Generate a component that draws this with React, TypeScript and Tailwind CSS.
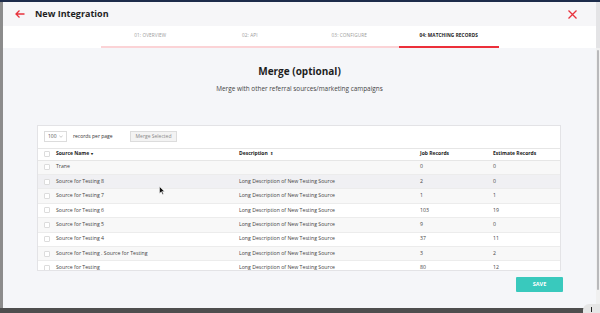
import React from "react";

type Row = { name: string; desc: string; jobs: string; est: string };

const rows: Row[] = [
  { name: "Trane", desc: "", jobs: "0", est: "0" },
  { name: "Source for Testing 8", desc: "Long Description of New Testing Source", jobs: "2", est: "0" },
  { name: "Source for Testing 7", desc: "Long Description of New Testing Source", jobs: "1", est: "1" },
  { name: "Source for Testing 6", desc: "Long Description of New Testing Source", jobs: "103", est: "19" },
  { name: "Source for Testing 5", desc: "Long Description of New Testing Source", jobs: "9", est: "0" },
  { name: "Source for Testing 4", desc: "Long Description of New Testing Source", jobs: "37", est: "11" },
  { name: "Source for Testing . Source for Testing", desc: "Long Description of New Testing Source", jobs: "3", est: "2" },
  { name: "Source for Testing", desc: "Long Description of New Testing Source", jobs: "80", est: "12" },
];

const tabs = ["01: OVERVIEW", "02: API", "03: CONFIGURE", "04: MATCHING RECORDS"];

const Checkbox = () => (
  <span className="block h-[6px] w-[6px] rounded-[1px] border border-[#dcdcdc] bg-white" />
);

const cols = "grid grid-cols-[15px_183px_181px_73px_1fr] items-center";

const App = () => {
  return (
    <div
      className="flex h-[313px] w-[600px] flex-col overflow-hidden bg-[#4b4b4b] [font-variant-ligatures:none]"
      style={{ fontFamily: '"Open Sans", "Liberation Sans", sans-serif' }}
    >
      <div className="h-[2px] bg-[#1d2c4b]" />
      <div className="flex flex-1">
        <div className="w-[3px] bg-[#8c8c8c]" />
        {/* modal */}
        <div className="flex flex-1 flex-col bg-[#f5f6f9]">
          <div className="flex h-[24px] items-center bg-[#f6f6f8] pl-[12px] pr-[19px]">
            <svg width="10" height="8" viewBox="0 0 10 8" className="text-[#e8323c]">
              <path d="M9.5 4H1M4.5 0.5L1 4l3.5 3.5" fill="none" stroke="currentColor" strokeWidth="1.3" />
            </svg>
            <span className="ml-[10px] text-[9px] font-bold text-[#1e1e1e]">New Integration</span>
            <svg width="9" height="9" viewBox="0 0 9 9" className="ml-auto text-[#e8323c]">
              <path d="M0.5 0.5l8 8M8.5 0.5l-8 8" stroke="currentColor" strokeWidth="1.3" />
            </svg>
          </div>
          <div className="flex h-[22px] justify-center bg-white">
            <div className="grid w-[398px] grid-cols-4">
              {tabs.map((t, i) => (
                <div
                  key={t}
                  className={`flex items-center justify-center text-[4.7px] tracking-[0.1px] ${
                    i === 3
                      ? "border-b-2 border-[#ec2f3a] font-bold text-[#222]"
                      : "border-b-2 border-[#fbd3d6] text-[#9a9a9a]"
                  }`}
                >
                  {t}
                </div>
              ))}
            </div>
          </div>
          <div className="relative flex flex-1 flex-col items-center">
            <div className="mt-[16px] text-[10px] font-bold text-[#1e1e1e]">Merge (optional)</div>
            <div className="mt-[5px] text-[6.4px] text-[#444]">
              Merge with other referral sources/marketing campaigns
            </div>
            <div className="mt-[31px] ml-[34px] flex h-[146px] w-[524px] flex-col self-start overflow-hidden border border-[#e3e3e6] bg-white">
              <div className="flex h-[22px] shrink-0 items-center pl-[6px] text-[5px] text-[#333]">
                <div className="flex h-[11px] w-[23px] items-center justify-between border border-[#dcdcdc] px-[3px] text-[#555]">
                  <span>100</span>
                  <svg width="4" height="3" viewBox="0 0 4 3">
                    <path d="M0.3 0.5L2 2.3 3.7 0.5" fill="none" stroke="#aaa" strokeWidth="0.6" />
                  </svg>
                </div>
                <span className="ml-[6px]">records per page</span>
                <div className="ml-[17px] flex h-[11px] items-center border border-[#dcdcdc] bg-[#f3f3f3] px-[5px] text-[#888]">
                  Merge Selected
                </div>
              </div>
              <div className={`${cols} h-[13px] shrink-0 border-y border-[#e6e6e6] text-[5px] font-bold text-[#222]`}>
                <div className="pl-[6px]">
                  <Checkbox />
                </div>
                <div className="flex items-center gap-[2px] pl-[3px]">
                  Source Name <span className="text-[4px]">▾</span>
                </div>
                <div className="flex items-center gap-[2px] pl-[3px]">
                  Description <span className="text-[4px]">⇕</span>
                </div>
                <div className="pl-[3px]">Job Records</div>
                <div className="pl-[3px]">Estimate Records</div>
              </div>
              {rows.map((r, i) => (
                <div
                  key={r.name + i}
                  className={`${cols} h-[14.4px] shrink-0 border-b border-[#ececec] text-[5.2px] text-[#444] ${
                    i === 1 ? "bg-[#f0f0f3]" : i % 2 === 0 ? "bg-[#f8f8f8]" : "bg-white"
                  }`}
                >
                  <div className="pl-[6px]">
                    <Checkbox />
                  </div>
                  <div className="truncate pl-[3px]">{r.name}</div>
                  <div className="truncate pl-[3px]">{r.desc}</div>
                  <div className="pl-[3px]">{r.jobs}</div>
                  <div className="pl-[3px]">{r.est}</div>
                </div>
              ))}
            </div>
            <div className="mt-[6px] flex w-full justify-end pr-[33px]">
              <div className="flex h-[15px] w-[47px] items-center justify-center rounded-[1px] bg-[#39c9bd] text-[5.5px] font-bold text-white">
                SAVE
              </div>
            </div>
            {/* mouse cursor */}
            <svg
              width="6"
              height="9"
              viewBox="0 0 6 9"
              className="absolute left-[156px] top-[138px]"
            >
              <path d="M0.5 0.5v7l1.8-1.7 1.2 2.7 1-0.5-1.2-2.6H5.5z" fill="#111" stroke="#fff" strokeWidth="0.5" />
            </svg>
          </div>
        </div>
        <div className="flex w-[4px] flex-col bg-[#f0f0f0]">
          <div className="h-[46px] bg-[#e4e4e6]" />
          <div className="mx-auto mt-[2px] h-[240px] w-[2px] rounded-full bg-[#b9b9bb]" />
        </div>
      </div>
      <div className="relative h-[5px] bg-[#4e4e4e]">
        <div className="absolute right-0 top-[-4px] flex h-[9px] w-[17px] justify-center rounded-tl-[6px] bg-[#e6e6e6]">
          <div className="mt-[3px] h-[5px] w-[1px] bg-[#222]" />
        </div>
      </div>
    </div>
  );
};

export default App;
